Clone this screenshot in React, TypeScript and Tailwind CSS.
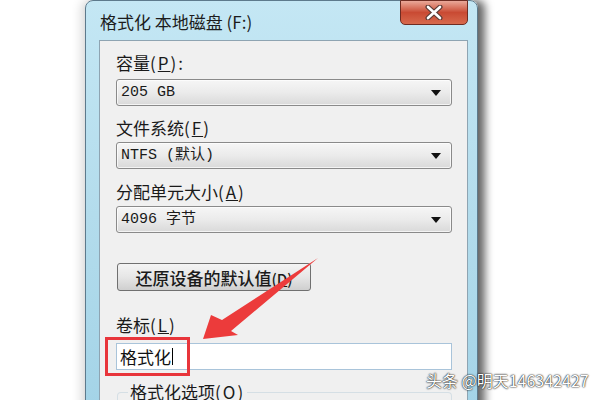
import React from 'react';

const cjk = "font-['Noto_Sans_CJK_SC','Noto_Sans',sans-serif]";
const mono = "font-['Liberation_Mono','Noto_Sans_CJK_SC',monospace]";

function Combo({ value }: { value: string }) {
  return (
    <div className="h-[27px] w-full flex items-center justify-between rounded-[3px] border border-[#8a8a8a] bg-gradient-to-b from-[#f6f6f6] via-[#ebebeb] to-[#d9d9d9] pl-[4px] pr-[10px] shadow-[inset_0_0_0_1px_rgba(255,255,255,0.7)]">
      <span className={`${mono} text-[15px] leading-none text-[#1a1a1a] whitespace-pre`}>{value}</span>
      <svg width="10" height="6" viewBox="0 0 10 6">
        <path d="M0 0 L10 0 L5 6 Z" fill="#111" />
      </svg>
    </div>
  );
}

function Label({ text, hot, tail = '' }: { text: string; hot: string; tail?: string }) {
  return (
    <div className={`${cjk} h-[20px] leading-[20px] text-[17px] text-[#1a1a1a] whitespace-pre`}>
      {text}
      <span className="tracking-[2px]">(<span className="underline">{hot}</span>)</span>
      {tail}
    </div>
  );
}

export default function App() {
  return (
    <div className="relative w-[600px] h-[400px] bg-white overflow-hidden">
      <div className="flex pl-[85px]">
        {/* window */}
        <div className="w-[393px] h-[430px] flex flex-col rounded-t-[8px] border border-[#5d7a8c] bg-gradient-to-b from-[#c4e7f4] via-[#b3dcec] to-[#a2d3e7] shadow-[7px_0_9px_rgba(0,0,0,0.6),-5px_0_10px_rgba(0,0,0,0.12)]">
          {/* title bar */}
          <div className="relative h-[39px] pl-[14px] flex items-center">
            <span className={`${cjk} text-[17px] leading-none text-[#1c1c1c] mt-[2px]`}>格式化 本地磁盘 (F:)</span>
            <div className="absolute top-[-1px] right-[9px] w-[68px] h-[25px] rounded-b-[5px] border border-[#6e2c22] bg-gradient-to-b from-[#e9a899] via-[#c94a33] to-[#d7694d] flex items-center justify-center">
              <svg width="18" height="15" viewBox="0 0 18 15">
                <path d="M3 2 L15 13 M15 2 L3 13" stroke="#5a3b36" strokeWidth="5" strokeLinecap="round" />
                <path d="M3 2 L15 13 M15 2 L3 13" stroke="#ffffff" strokeWidth="2.6" strokeLinecap="round" />
              </svg>
            </div>
          </div>
          {/* client area */}
          <div className="flex-1 ml-[13px] mr-[9px] bg-[#f0f0f0] border border-[#8ea4b2] pl-[16px] pr-[15px] flex flex-col">
            <div className="mt-[12px]"><Label text="容量" hot="P" tail=":" /></div>
            <div className="mt-[6px]"><Combo value="205 GB" /></div>
            <div className="mt-[12px]"><Label text="文件系统" hot="F" /></div>
            <div className="mt-[4px]"><Combo value="NTFS (默认)" /></div>
            <div className="mt-[13px]"><Label text="分配单元大小" hot="A" /></div>
            <div className="mt-[4px]"><Combo value="4096 字节" /></div>
            <div className="mt-[30px] ml-[1px] w-[194px] h-[28px] rounded-[3px] border border-[#707070] bg-gradient-to-b from-[#f4f4f4] via-[#e6e6e6] to-[#cfcfcf] flex items-center justify-center">
              <span className={`${cjk} text-[17px] font-medium leading-none text-[#1a1a1a] whitespace-pre`}>还原设备的默认值<span className="text-[15px]">(<span className="underline">D</span>)</span></span>
            </div>
            <div className="mt-[24px]"><Label text="卷标" hot="L" /></div>
            <div className="mt-[8px] h-[27px] w-full bg-white border border-[#a9c4da] flex items-center pl-[3px]">
              <span className={`${cjk} text-[17px] leading-none text-[#111]`}>格式化</span>
              <span className="w-[1px] h-[17px] bg-black ml-[1px]" />
            </div>
            <div className="mt-[22px] ml-[1px] h-[30px] rounded-t-[4px] border-t border-l border-r border-[#d5dfe5] flex">
              <span className={`${cjk} -mt-[11px] ml-[10px] h-[20px] leading-[20px] px-[2px] bg-[#f0f0f0] text-[17px] text-[#1a1a1a] whitespace-pre`}>
                格式化选项<span className="tracking-[2px]">(<span className="underline">O</span>)</span>
              </span>
            </div>
          </div>
        </div>
      </div>

      {/* annotation: red box */}
      <div className="absolute left-[105px] top-[337px] w-[85px] h-[39px] border-[3px] border-[#e8353b]" />

      {/* annotation: red arrow */}
      <svg className="absolute left-0 top-0 pointer-events-none" width="600" height="400" viewBox="0 0 600 400">
        <polygon points="203,339 211,315 222,320 318,258 231,331 238,335" fill="#ec3b3b" />
      </svg>

      {/* watermark */}
      <div className={`${cjk} absolute left-[426px] top-[369px] text-[16px] leading-[22px] text-white whitespace-pre [text-shadow:0_0_2px_rgba(0,0,0,0.95),0_0_1px_rgba(0,0,0,0.95)]`}>
        头条 @明天146342427
      </div>
    </div>
  );
}
